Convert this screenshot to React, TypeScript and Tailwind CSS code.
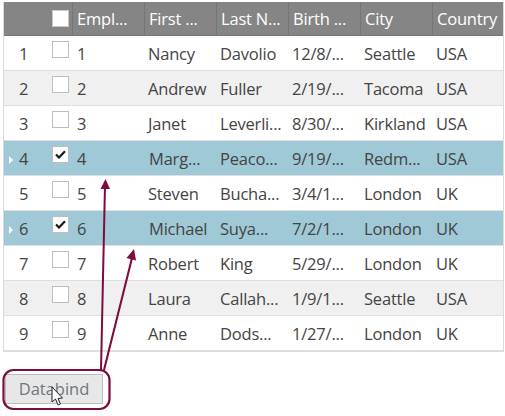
const rows = [
  { n: "1", first: "Nancy", last: "Davolio", birth: "12/8/...", city: "Seattle", country: "USA" },
  { n: "2", first: "Andrew", last: "Fuller", birth: "2/19/...", city: "Tacoma", country: "USA" },
  { n: "3", first: "Janet", last: "Leverli...", birth: "8/30/...", city: "Kirkland", country: "USA" },
  { n: "4", first: "Marg...", last: "Peaco...", birth: "9/19/...", city: "Redm...", country: "USA", selected: true },
  { n: "5", first: "Steven", last: "Bucha...", birth: "3/4/1...", city: "London", country: "UK" },
  { n: "6", first: "Michael", last: "Suya...", birth: "7/2/1...", city: "London", country: "UK", selected: true },
  { n: "7", first: "Robert", last: "King", birth: "5/29/...", city: "London", country: "UK" },
  { n: "8", first: "Laura", last: "Callah...", birth: "1/9/1...", city: "Seattle", country: "USA" },
  { n: "9", first: "Anne", last: "Dods...", birth: "1/27/...", city: "London", country: "UK" },
];

const headers = ["Empl...", "First ...", "Last N...", "Birth ...", "City", "Country"];

const Check = ({ checked }: { checked?: boolean }) => (
  <span className="w-[17px] h-[17px] border border-[#bdbdbd] bg-white flex items-center justify-center -mt-[7px]">
    {checked && (
      <svg width="11" height="9" viewBox="0 0 11 9">
        <path d="M1 4.5 L4 7.5 L10 1.2" fill="none" stroke="#1a1a1a" strokeWidth="2.2" />
      </svg>
    )}
  </span>
);

export default function App() {
  return (
    <div className="relative w-[505px] h-[416px] bg-white overflow-hidden font-['Open_Sans','Noto_Sans',sans-serif] text-[#444] text-[16.5px] tracking-[-0.2px]">
      <div className="pt-[2px] pl-[3px] w-[505px]">
        <div className="w-[501px] border-l border-r border-b border-[#dcdcdc]">
          <div className="grid grid-cols-[45px_23px_72px_72px_72px_72px_72px_72px] h-[34px] bg-[#858585] text-white items-center border-b border-[#757575]">
            <span />
            <span className="flex items-center justify-center h-full">
              <span className="w-[17px] h-[17px] bg-white border border-[#c9c9c9] -ml-[1px]" />
            </span>
            {headers.map((h) => (
              <span key={h} className="h-full flex items-center pl-[4px] pt-[2px] border-l border-[#757575] whitespace-nowrap overflow-hidden">
                {h}
              </span>
            ))}
          </div>
          {rows.map((r, i) => (
            <div
              key={r.n}
              className={`grid grid-cols-[45px_23px_72px_72px_72px_72px_72px_72px] h-[35px] items-center border-b border-[#dfdfdf] ${
                r.selected ? "bg-[#9fc9d6]" : i % 2 === 1 ? "bg-[#f0f0f0]" : "bg-white"
              }`}
            >
              <span className="relative pl-[15px] pt-[2px]">
                {r.selected && (
                  <span className="absolute left-[5px] top-[11px] w-0 h-0 border-y-[4px] border-y-transparent border-l-[4px] border-l-white" />
                )}
                {r.n}
              </span>
              <span className="flex justify-center">
                <Check checked={r.selected} />
              </span>
              <span className="pl-[5px] pt-[2px]">{r.n}</span>
              <span className={`pt-[2px] whitespace-nowrap ${r.selected ? "pl-[5px]" : "pl-[4px]"}`}>{r.first}</span>
              <span className="pl-[4px] pt-[2px] whitespace-nowrap">{r.last}</span>
              <span className="pl-[4px] pt-[2px] whitespace-nowrap">{r.birth}</span>
              <span className="pl-[4px] pt-[2px] whitespace-nowrap">{r.city}</span>
              <span className="pl-[4px] pt-[2px] whitespace-nowrap">{r.country}</span>
            </div>
          ))}
        </div>
        <button className="mt-[22px] ml-[2px] w-[98px] h-[30px] bg-[#e7e7e7] border border-[#bdbdbd] text-[#6f7780] flex items-center justify-center tracking-normal">
          Databind
        </button>
      </div>

      {/* annotation arrows */}
      <svg className="absolute left-0 top-0" width="505" height="416" viewBox="0 0 505 416">
        <rect x="3.5" y="370" width="106" height="39" rx="10" fill="none" stroke="#7e0a3e" strokeWidth="2.2" />
        <path d="M101 370 L105 185" stroke="#7e0a3e" strokeWidth="2" fill="none" />
        <path d="M105.5 179 L100.5 189 L110 189 Z" fill="#7e0a3e" />
        <path d="M104 370 L132 258" stroke="#7e0a3e" strokeWidth="2" fill="none" />
        <path d="M134 249 L126.5 258 L136 260.5 Z" fill="#7e0a3e" />
        <path d="M52 387 L52 402 L55.5 399 L58 405 L60.5 404 L58 398.5 L62.5 398 Z" fill="#fff" stroke="#222" strokeWidth="1" />
      </svg>
    </div>
  );
}
